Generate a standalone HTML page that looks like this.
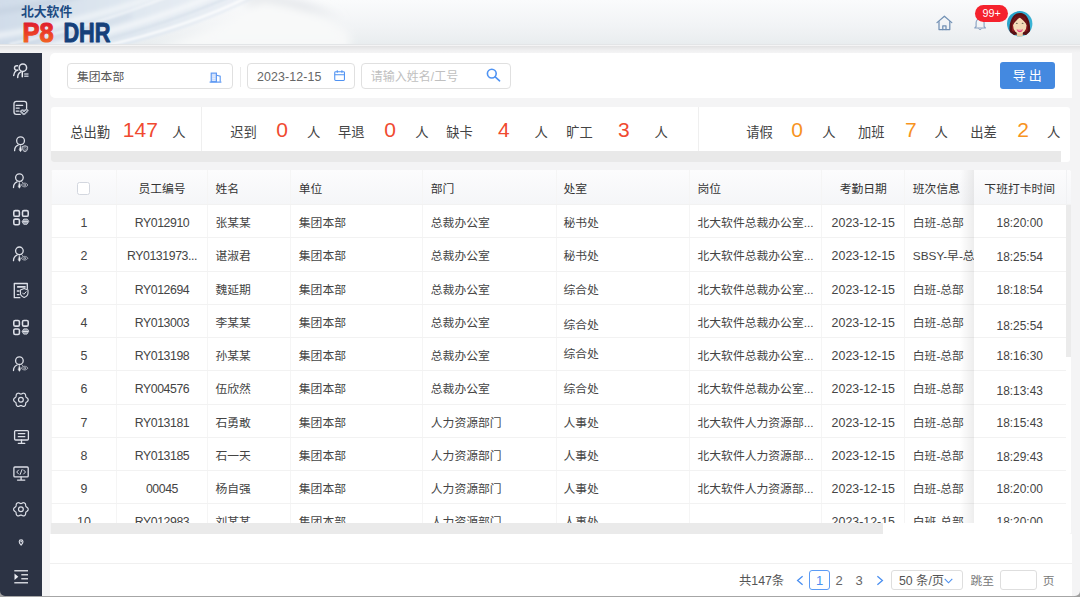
<!DOCTYPE html>
<html lang="zh-CN">
<head>
<meta charset="utf-8">
<title>P8 DHR</title>
<style>
*{box-sizing:border-box;margin:0;padding:0}
html,body{width:1080px;height:597px;overflow:hidden}
body{position:relative;background:#f4f4f5;font-family:"Liberation Sans","Noto Sans CJK SC",sans-serif;font-size:12px;color:#444;-webkit-font-smoothing:antialiased}
.abs{position:absolute}
/* header */
#hdr{position:absolute;left:0;top:0;width:1080px;height:45px;background:linear-gradient(180deg,#fafbfc 0%,#f2f4f6 55%,#e9edef 100%);border-bottom:1px solid #e3e5e7;overflow:hidden}
#hdr svg.bgsilk{position:absolute;left:0;top:0}
.logo-cn{position:absolute;left:21px;top:2.5px;font-size:12.8px;font-weight:700;color:#1d4b82;line-height:17px;white-space:nowrap}
/* sidebar */
#side{position:absolute;left:0;top:53px;width:42px;height:543px;background:#2c3344}
/* cards */
.card{position:absolute;background:#fff;border-radius:5px}
#c1{left:50px;top:53px;width:1021.5px;height:45px;border-radius:5px 0 0 5px}
#c2{left:50.6px;top:107.3px;width:1019.6px;height:55px;overflow:hidden;border-radius:3px}
#c3{left:51px;top:170px;width:1019.5px;height:363.8px;overflow:hidden;border-radius:3px 3px 3px 0}
#c4{left:50px;top:533.5px;width:1021.5px;height:62.5px;border-radius:0}
.inp{position:absolute;top:9.5px;height:26.5px;border:1px solid #e0e0e0;border-radius:4px;background:#fff;line-height:27px;font-size:11.8px;color:#555;white-space:nowrap}
.sl{position:absolute;top:16px;font-size:13.3px;line-height:20px;color:#444;white-space:nowrap}
.sn{position:absolute;top:9px;width:60px;text-align:center;font-size:21px;line-height:28px;white-space:nowrap}
.tr{position:absolute;left:0;width:1014.5px;border-bottom:1px solid #f2f2f2;color:#444;font-size:11.8px}
.th{background:linear-gradient(180deg,#fcfcfd,#f5f6f8);color:#333}
.td{position:absolute;top:0;height:100%;border-left:1px solid #f5f5f5;white-space:nowrap;overflow:hidden;padding:0 7.5px}
.td.c{text-align:center;padding:0}
.td.fx{background:#fff;border-left:none}
.th .td.fx{background:linear-gradient(180deg,#fcfcfd,#f5f6f8)}
.td.nm{font-size:12.4px}
.td.id{font-size:12.3px;letter-spacing:-.42px}
.td.tm{font-size:11.9px}
.cb{display:inline-block;width:13px;height:13px;border:1px solid #d3d7df;border-radius:2.5px;background:#fff;vertical-align:middle;position:relative;top:-1px;left:-1px}
.pg{position:absolute;top:37.6px;line-height:20px;font-size:12.3px;color:#555;white-space:nowrap}
.pn{width:20px;text-align:center;font-size:13px;color:#666}
</style>
</head>
<body>
<div id="hdr">
  <svg class="bgsilk" width="460" height="46" viewBox="0 0 460 46">
    <defs>
      <linearGradient id="lg1" x1="0" y1="0" x2="1" y2="0"><stop offset="0" stop-color="#d0dce9"/><stop offset=".5" stop-color="#dfe7f0"/><stop offset="1" stop-color="#edf1f6"/></linearGradient>
      <filter id="bl" x="-20%" y="-80%" width="140%" height="260%"><feGaussianBlur stdDeviation="2.5"/></filter>
      <filter id="bl2" x="-20%" y="-80%" width="140%" height="260%"><feGaussianBlur stdDeviation="1.1"/></filter>
      <filter id="bl3" x="-20%" y="-80%" width="140%" height="260%"><feGaussianBlur stdDeviation="5"/></filter>
    </defs>
    <g filter="url(#bl2)">
      <path d="M-5 -5H262C225 14 170 36 105 50H-5Z" fill="url(#lg1)"/>
    </g>
    <g filter="url(#bl3)">
      <path d="M262 -6C300 0 325 8 345 22C330 12 290 6 240 4Z" fill="#d9dde2" opacity=".9"/>
      <path d="M150 50C200 34 235 18 262 0C300 6 330 16 350 34L350 50Z" fill="#f8f9fa" opacity=".9"/>
    </g>
    <g filter="url(#bl)" fill="none" stroke-linecap="round">
      <path d="M-5 36C50 28 110 12 160 -5" stroke="#f4f7fa" stroke-width="5" opacity=".9"/>
      <path d="M40 48C100 36 165 16 215 -5" stroke="#fbfcfd" stroke-width="4" opacity=".95"/>
      <path d="M-5 12C25 8 55 2 80 -5" stroke="#c2cfde" stroke-width="5" opacity=".7"/>
      <path d="M-5 50C40 42 90 30 130 16" stroke="#cbd7e4" stroke-width="4" opacity=".6"/>
    </g>
    <g filter="url(#bl2)" fill="none" stroke-linecap="round">
      <path d="M95 48C160 34 215 14 250 -4" stroke="#ffffff" stroke-width="2.2" opacity=".95"/>
      <path d="M70 48C135 34 190 14 232 -4" stroke="#d3dde8" stroke-width="1.6" opacity=".8"/>
      <path d="M10 44C70 32 125 14 170 -4" stroke="#ffffff" stroke-width="1.3" opacity=".8"/>
    </g>
  </svg>
  <div class="logo-cn">北大软件</div>
  <svg class="abs" style="left:0;top:14px" width="130" height="34" viewBox="0 14 130 34" font-family="Liberation Sans, sans-serif" font-weight="700" font-size="28.5">
    <defs><linearGradient id="p8g" x1="0" y1="21" x2="0" y2="43" gradientUnits="userSpaceOnUse"><stop offset="0" stop-color="#dc1730"/><stop offset=".5" stop-color="#ea3a28"/><stop offset="1" stop-color="#f26424"/></linearGradient></defs>
    <text x="22.4" y="42" fill="url(#p8g)" stroke="url(#p8g)" stroke-width="1.1" stroke-linejoin="round" textLength="31.2" lengthAdjust="spacingAndGlyphs">P8</text>
    <text x="63.4" y="42" fill="#15407a" stroke="#15407a" stroke-width="1" stroke-linejoin="round" textLength="47" lengthAdjust="spacingAndGlyphs">DHR</text>
  </svg>
  <svg class="abs" style="left:936px;top:14.5px" width="17" height="16" viewBox="0 0 17 16" fill="none" stroke="#7190b4" stroke-width="1.25" stroke-linejoin="round" stroke-linecap="round"><path d="M1 7.6L8.4 1.2l7.400000000000001 6.4"/><path d="M3 6.6v8h10.8v-8"/><path d="M6.8 14.6v-3.8h3.2v3.8"/></svg>
  <svg class="abs" style="left:972.5px;top:16.5px" width="14" height="14" viewBox="972.5 16.5 14 14" fill="none" stroke="#8aa2c2" stroke-width="1.15" stroke-linejoin="round" stroke-linecap="round"><path d="M975.6 26V22.2c0-2.3 1.8-4.1 4-4.1s4 1.8 4 4.1V26l1.3 1.5h-10.6z"/><path d="M978.1 28.3c.3.5.8.8 1.5.8s1.2-.3 1.5-.8" stroke-width="1"/></svg>
  <div class="abs" style="left:975px;top:5px;width:33.2px;height:17px;border-radius:9px;background:#f5222d;color:#fff;font-size:10.8px;line-height:17px;text-align:center;letter-spacing:0">99+</div>
  <svg class="abs" style="left:1007px;top:10.5px" width="26" height="26" viewBox="0 0 26 26">
    <defs><clipPath id="avc"><circle cx="12.7" cy="12.8" r="12.7"/></clipPath><linearGradient id="avg" x1="0" y1="0" x2="1" y2="1"><stop offset="0" stop-color="#1f9cc6"/><stop offset="1" stop-color="#45bddb"/></linearGradient></defs>
    <circle cx="12.7" cy="12.8" r="12.7" fill="url(#avg)"/>
    <g clip-path="url(#avc)">
      <path d="M2.6 21.5C1.8 14 3.8 6.2 8.4 3.2C10.9 1.5 14.9 1.5 17.4 3.2C22 6.2 23.8 14 23 21.5C21.8 24.6 19 25.4 17.3 23.8L8.3 23.8C6.6 25.4 3.8 24.6 2.6 21.5Z" fill="#5a0f14"/>
      <path d="M5 20C4.600000000000001 14 5.8 8.5 8.8 5.5L10.4 7C8 10 7.2 15 7.4 21Z" fill="#8f1a1f"/>
      <path d="M20.6 20C21 14 19.8 8.5 16.8 5.5L15.2 7C17.6 10 18.4 15 18.2 21Z" fill="#8f1a1f"/>
      <rect x="9.8" y="20" width="6" height="7" fill="#ecc9a3"/>
      <ellipse cx="12.8" cy="14.6" rx="6.7" ry="8.1" fill="#f4dbb9"/>
      <path d="M12.8 4.2C8.8 4.8 6 8.2 5.7 14.2C7.4 11.4 10 8.6 12.8 6.6C15.6 8.6 18.2 11.4 19.9 14.2C19.6 8.2 16.8 4.8 12.8 4.2Z" fill="#6a1216"/>
      <ellipse cx="9.8" cy="12.3" rx="1" ry=".65" fill="#6e6a58"/><ellipse cx="15.6" cy="12.3" rx="1" ry=".65" fill="#6e6a58"/>
      <path d="M9.5 18.2C11.2 19 14.4 19 16.1 18.2C15.2 20.6 13.9 21.2 12.8 21.2C11.700000000000001 21.2 10.4 20.6 9.5 18.2Z" fill="#e8437c"/>
      <path d="M10.6 18.9C12 19.3 13.6 19.3 15 18.9C14.3 19.7 13.5 19.9 12.8 19.9C12.1 19.9 11.3 19.7 10.6 18.9Z" fill="#f7a3bf"/>
    </g>
  </svg>
</div>
<div class="abs" style="left:0;top:46px;width:1080px;height:7px;background:linear-gradient(180deg,rgba(0,0,0,.075),rgba(0,0,0,.02) 60%,rgba(0,0,0,0))"></div>
<div id="side"><svg class="abs" style="left:0;top:0" width="42" height="543" viewBox="0 53 42 543" fill="none" stroke="#dde0e8" stroke-width="1.3" stroke-linecap="round" stroke-linejoin="round">
<!-- 1 people list -->
<g stroke-width="1.5"><circle cx="22.9" cy="67.7" r="3.7"/><path d="M17.5 65.8a2.3 2.3 0 1 0 .4 4.2"/><path d="M13.700000000000001 75.5C13.8 73.3 14.600000000000001 71.7 16.1 70.8"/><path d="M17.700000000000003 77.5C17.700000000000003 75 18.900000000000002 72.9 20.900000000000002 71.9"/></g><path d="M22.3 72.4v4.4" stroke="#f0f2f6" stroke-width="1.5"/><path d="M24.2 73.9h4.3M24.2 76.3h4.3" stroke="#b9bec9" stroke-width="1.5" stroke-linecap="butt"/>
<!-- 2 doc check -->
<path d="M26.6 108.5v-4.900000000000002c0-1.3-1-2.3-2.3-2.3h-8c-1.3 0-2.3 1-2.3 2.3v8.4c0 1.3 1 2.3 2.3 2.3h4"/><path d="M16.2 105.3h6.5M16.2 108.1h3M16.2 111.1h2.4"/><path d="M20.2 111.2c1.2-1.6 2.6-1.9 3.9-.9c1.400000000000002-1.2 3-1.300000000000001 4.2-.2c-.7 2.2-2.5 3.9-4.4 4.6c-1.600000000000001-.5-3-1.7-3.7-3.5z" fill="#aeb4c0" stroke="#c4c9d3" stroke-width=".8"/><path d="M22.6 111.6l1.4 1.4 2.2-2.2" stroke="#2c3344" stroke-width="1"/>
<!-- 3 person shield -->
<circle cx="20.55" cy="140.8" r="3.9"/><path d="M14.6 150.7C14.6 148 16 146 18.1 145.2"/><path d="M20.5 145.8l1.1 4.3-1.1 1.6-1.1-1.6z" fill="#eef0f5" stroke="#eef0f5" stroke-width=".5"/><g opacity=".8"><path d="M22.4 146.6l2.6-.9 2.6.9v2.1c0 1.6-1.3 2.6-2.6 3.100000000000001-1.3-.5-2.6-1.5-2.6-3.1z" stroke-width="1" fill="#e4e7ee" fill-opacity=".45"/><path d="M23.9 148.5l.9.9 1.5-1.7" stroke="#2c3344" stroke-width=".8"/></g>
<!-- 4,6,9 person eye -->
<g transform="translate(0 0)"><circle cx="19.4" cy="177.6" r="3.8"/><path d="M13.5 187.5C13.5 184.8 14.9 182.8 17 181.9"/><path d="M19.4 182.4l1.05 4.3-1.05 1.6-1.05-1.6z" fill="#eef0f5" stroke="#eef0f5" stroke-width=".4"/><g opacity=".72"><path d="M21.3 185c1.6-2.5 5-2.5 6.6 0c-1.6 2.5-5 2.5-6.6 0z" stroke-width="1"/><circle cx="24.6" cy="185" r=".9" stroke-width=".9"/><path d="M21.6 181.3c.6.4 1 .9 1.300000000000001 1.6" stroke-width="1"/></g></g><g transform="translate(0 73.2)"><circle cx="19.4" cy="177.6" r="3.8"/><path d="M13.5 187.5C13.5 184.8 14.9 182.8 17 181.9"/><path d="M19.4 182.4l1.05 4.3-1.05 1.6-1.05-1.6z" fill="#eef0f5" stroke="#eef0f5" stroke-width=".4"/><g opacity=".72"><path d="M21.3 185c1.6-2.5 5-2.5 6.6 0c-1.6 2.5-5 2.5-6.6 0z" stroke-width="1"/><circle cx="24.6" cy="185" r=".9" stroke-width=".9"/><path d="M21.6 181.3c.6.4 1 .9 1.300000000000001 1.6" stroke-width="1"/></g></g><g transform="translate(0 183.1)"><circle cx="19.4" cy="177.6" r="3.8"/><path d="M13.5 187.5C13.5 184.8 14.9 182.8 17 181.9"/><path d="M19.4 182.4l1.05 4.3-1.05 1.6-1.05-1.6z" fill="#eef0f5" stroke="#eef0f5" stroke-width=".4"/><g opacity=".72"><path d="M21.3 185c1.6-2.5 5-2.5 6.6 0c-1.6 2.5-5 2.5-6.6 0z" stroke-width="1"/><circle cx="24.6" cy="185" r=".9" stroke-width=".9"/><path d="M21.6 181.3c.6.4 1 .9 1.300000000000001 1.6" stroke-width="1"/></g></g>
<!-- 5,8 grid -->
<g transform="translate(0 0)" stroke-width="1.55"><rect x="13.8" y="210.6" width="5.6" height="5.7" rx="1.4"/><rect x="22.5" y="210.6" width="5.7" height="5.7" rx="1.4"/><rect x="13.8" y="219.1" width="5.6" height="5.6" rx="1.4"/><path d="M28.55 221.70 L26.95 224.30 L23.75 224.30 L22.15 221.70 L23.75 219.10 L26.95 219.10Z" stroke-width="1" stroke="#c9cdd6" fill="#9097a5"/><path d="M22.9 221.7h4.9" stroke-width=".9" stroke="#eceef3"/></g><g transform="translate(0 109.8)" stroke-width="1.55"><rect x="13.8" y="210.6" width="5.6" height="5.7" rx="1.4"/><rect x="22.5" y="210.6" width="5.7" height="5.7" rx="1.4"/><rect x="13.8" y="219.1" width="5.6" height="5.6" rx="1.4"/><path d="M28.55 221.70 L26.95 224.30 L23.75 224.30 L22.15 221.70 L23.75 219.10 L26.95 219.10Z" stroke-width="1" stroke="#c9cdd6" fill="#9097a5"/><path d="M22.9 221.7h4.9" stroke-width=".9" stroke="#eceef3"/></g>
<!-- 7 doc shield -->
<path d="M27.3 288.5v-5h-13v14.2h5.5"/><path d="M17.7 286.9h7.3" stroke-width="1.6"/><path d="M17.3 291h1.8M17.3 294.6h1.8"/><path d="M20.4 290l3.8-1.4 3.8 1.4v3c0 2.2-2 3.7-3.8 4.4-1.8-.7-3.8-2.2-3.8-4.4z" stroke-width="1.1"/><path d="M22.6 293l1.3 1.3 2.2-2.5" stroke-width="1"/>
<!-- 10,13 gear -->
<g stroke-width="1.2"><path d="M28.15 399.80 L28.08 400.43 L27.80 401.02 L27.31 401.52 L26.74 401.93 L26.23 402.28 L25.88 402.68 L25.72 403.17 L25.66 403.80 L25.60 404.50 L25.40 405.16 L25.03 405.70 L24.52 406.08 L23.95 406.33 L23.30 406.38 L22.62 406.21 L21.98 405.92 L21.41 405.66 L20.90 405.55 L20.39 405.66 L19.82 405.92 L19.18 406.21 L18.50 406.38 L17.85 406.33 L17.27 406.08 L16.77 405.70 L16.40 405.16 L16.20 404.50 L16.14 403.80 L16.08 403.17 L15.92 402.68 L15.57 402.28 L15.06 401.93 L14.49 401.52 L14.00 401.02 L13.72 400.43 L13.65 399.80 L13.72 399.17 L14.00 398.58 L14.49 398.08 L15.06 397.67 L15.57 397.32 L15.92 396.93 L16.08 396.43 L16.14 395.80 L16.20 395.10 L16.40 394.44 L16.77 393.90 L17.27 393.52 L17.85 393.27 L18.50 393.22 L19.18 393.39 L19.82 393.68 L20.39 393.94 L20.90 394.05 L21.41 393.94 L21.98 393.68 L22.62 393.39 L23.30 393.22 L23.95 393.27 L24.52 393.52 L25.03 393.90 L25.40 394.44 L25.60 395.10 L25.66 395.80 L25.72 396.43 L25.88 396.93 L26.23 397.32 L26.74 397.67 L27.31 398.08 L27.80 398.58 L28.08 399.17Z"/><circle cx="20.9" cy="399.8" r="2.4"/></g><g stroke-width="1.2"><path d="M28.15 509.30 L28.08 509.93 L27.80 510.52 L27.31 511.02 L26.74 511.43 L26.23 511.78 L25.88 512.17 L25.72 512.67 L25.66 513.30 L25.60 514.00 L25.40 514.66 L25.03 515.20 L24.52 515.58 L23.95 515.83 L23.30 515.88 L22.62 515.71 L21.98 515.42 L21.41 515.16 L20.90 515.05 L20.39 515.16 L19.82 515.42 L19.18 515.71 L18.50 515.88 L17.85 515.83 L17.27 515.58 L16.77 515.20 L16.40 514.66 L16.20 514.00 L16.14 513.30 L16.08 512.67 L15.92 512.18 L15.57 511.78 L15.06 511.43 L14.49 511.02 L14.00 510.52 L13.72 509.93 L13.65 509.30 L13.72 508.67 L14.00 508.08 L14.49 507.58 L15.06 507.17 L15.57 506.82 L15.92 506.43 L16.08 505.93 L16.14 505.30 L16.20 504.60 L16.40 503.94 L16.77 503.40 L17.27 503.02 L17.85 502.77 L18.50 502.72 L19.18 502.89 L19.82 503.18 L20.39 503.44 L20.90 503.55 L21.41 503.44 L21.98 503.18 L22.62 502.89 L23.30 502.72 L23.95 502.77 L24.52 503.02 L25.03 503.40 L25.40 503.94 L25.60 504.60 L25.66 505.30 L25.72 505.93 L25.88 506.43 L26.23 506.82 L26.74 507.17 L27.31 507.58 L27.80 508.08 L28.08 508.67Z"/><circle cx="20.9" cy="509.3" r="2.4"/></g>
<!-- 11 monitor lines -->
<rect x="14.6" y="430.6" width="13.8" height="9.4" rx="1"/><path d="M18.3 433.6h6.5M18.3 436.7h6.5M21.5 440v3.2M18.3 443.3h6.5"/>
<!-- 12 monitor code -->
<rect x="13.9" y="467" width="14.3" height="9.9" rx="1"/><path d="M21.1 477v3M17.5 480.1h7.3"/><path d="M18.6 470l-1.9 2 1.9 2M23.6 470l1.9 2-1.9 2M22 469.6l-1.8 4.8" stroke-width="1"/>
<!-- 14 pin -->
<path d="M21.1 545.2c-1.2-1.4-1.9-2.4-1.9-3.4a1.9 1.9 0 0 1 3.8 0c0 1-.7 2-1.9 3.4z" stroke-width="1.1"/><circle cx="21.1" cy="541.7" r=".5" stroke-width=".7"/>
<!-- 15 indent -->
<g stroke="#cfd2d8" stroke-width="1.5" stroke-linecap="butt"><path d="M14.3 570.7h13.7M21.3 574.7h6.7M21.3 578.7h6.7M14.3 582.8h13.7"/></g><path d="M14.5 573.4l3.8 3.3-3.8 3.3z" fill="#eceef4" stroke="none"/>
</svg></div>
<div class="card" id="c1">
  <div class="inp" style="left:17px;width:165.5px;padding-left:9px">集团本部
    <svg class="abs" style="left:141px;top:8.5px" width="14" height="12" viewBox="209 72 14 12" fill="none" stroke="#5a96f2" stroke-width="1.1"><rect x="211.2" y="73.1" width="5.2" height="8.6" fill="#c6d9fb"/><path d="M212.3 75h3M212.3 76.8h3M212.3 78.6h3M212.3 80.3h3" stroke="#eef4fe" stroke-width=".8"/><path d="M216.6 75.2l3.6 1v5.5"/><path d="M209.6 82.1h11.8" stroke-width="1.2"/></svg>
  </div>
  <div class="abs" style="left:190px;top:14px;width:1px;height:20px;background:#ebebeb"></div>
  <div class="inp" style="left:197px;width:108px;padding-left:9px;color:#666;font-size:12.4px;letter-spacing:.1px">2023-12-15
    <svg class="abs" style="left:85.7px;top:6.3px" width="11.2" height="11.2" viewBox="0 0 12 12" fill="none" stroke="#4f92f2" stroke-width="1.15"><rect x=".8" y="1.8" width="10.4" height="9.4" rx="1"/><path d="M.8 5h10.4M3.5 .4v2.6M8.5 .4v2.6"/></svg>
  </div>
  <div class="inp" style="left:311.3px;width:149.7px;padding-left:8.5px;color:#c0c0c0;font-size:12px">请输入姓名/工号
    <svg class="abs" style="left:123.4px;top:4.4px" width="15" height="14" viewBox="0 0 15 14" fill="none" stroke="#4f93f3" stroke-width="1.6" stroke-linecap="round"><circle cx="5.8" cy="5.6" r="4.4"/><path d="M9.2 8.8l4.4 4"/></svg>
  </div>
  <div class="abs" style="left:950px;top:9px;width:54.5px;height:27px;border-radius:3px;background:#4489e0;color:#fff;font-size:13px;line-height:27px;text-align:center;letter-spacing:3px;padding-left:3px">导出</div>
</div>
<div class="card" id="c2">
  <span class="sl" style="left:19.7px">总出勤</span><span class="sn" style="left:59.8px;color:#f04a30">147</span><span class="sl" style="left:121.7px">人</span>
  <span class="sl" style="left:179.7px">迟到</span><span class="sn" style="left:201.5px;color:#f04a30">0</span><span class="sl" style="left:256.3px">人</span>
  <span class="sl" style="left:287.3px">早退</span><span class="sn" style="left:309.4px;color:#f04a30">0</span><span class="sl" style="left:364.7px">人</span>
  <span class="sl" style="left:395.7px">缺卡</span><span class="sn" style="left:423.2px;color:#f04a30">4</span><span class="sl" style="left:484.0px">人</span>
  <span class="sl" style="left:515.7px">旷工</span><span class="sn" style="left:543.2px;color:#f04a30">3</span><span class="sl" style="left:604.0px">人</span>
  <span class="sl" style="left:695.7px">请假</span><span class="sn" style="left:716.5px;color:#f7931e">0</span><span class="sl" style="left:771.7px">人</span>
  <span class="sl" style="left:807.3px">加班</span><span class="sn" style="left:830.2px;color:#f7931e">7</span><span class="sl" style="left:884.0px">人</span>
  <span class="sl" style="left:919.7px">出差</span><span class="sn" style="left:942.5px;color:#f7931e">2</span><span class="sl" style="left:996.3px">人</span>
  <div class="abs" style="left:150px;top:0;width:1px;height:43.5px;background:#efefef"></div>
  <div class="abs" style="left:647px;top:0;width:1px;height:43.5px;background:#efefef"></div>
  <div class="abs" style="left:0;top:43.5px;width:1010px;height:11.5px;background:#e9e9e9"></div>
</div>
<div class="card" id="c3">
<div class="tr th" style="top:0;height:35px;line-height:39px;width:1019.5px"><div class="td c" style="left:0.0px;width:65.0px"><span class="cb"></span></div><div class="td c" style="left:65.0px;width:91.0px">员工编号</div><div class="td l" style="left:156.0px;width:83.3px">姓名</div><div class="td l" style="left:239.3px;width:132.0px">单位</div><div class="td l" style="left:371.3px;width:133.7px">部门</div><div class="td l" style="left:505.0px;width:133.0px;padding-left:6.5px">处室</div><div class="td l" style="left:638.0px;width:132.3px">岗位</div><div class="td c" style="left:770.3px;width:83.0px">考勤日期</div><div class="td l" style="left:853.3px;width:69.7px">班次信息</div><div class="td c fx" style="left:923.0px;width:91.5px">下班打卡时间</div></div>
<div class="tr" style="top:35.00px;height:33.25px;line-height:36.25px"><div class="td c nm" style="left:0.0px;width:65.0px">1</div><div class="td c id" style="left:65.0px;width:91.0px">RY012910</div><div class="td l" style="left:156.0px;width:83.3px">张某某</div><div class="td l" style="left:239.3px;width:132.0px">集团本部</div><div class="td l" style="left:371.3px;width:133.7px">总裁办公室</div><div class="td l" style="left:505.0px;width:133.0px;padding-left:6.5px">秘书处</div><div class="td l" style="left:638.0px;width:132.3px">北大软件总裁办公室...</div><div class="td c nm" style="left:770.3px;width:83.0px">2023-12-15</div><div class="td l" style="left:853.3px;width:69.7px">白班-总部</div><div class="td c fx tm" style="left:923.0px;width:91.5px">18:20:00</div></div>
<div class="tr" style="top:68.25px;height:33.25px;line-height:36.25px"><div class="td c nm" style="left:0.0px;width:65.0px">2</div><div class="td c id" style="left:65.0px;width:91.0px">RY0131973...</div><div class="td l" style="left:156.0px;width:83.3px">谌淑君</div><div class="td l" style="left:239.3px;width:132.0px">集团本部</div><div class="td l" style="left:371.3px;width:133.7px">总裁办公室</div><div class="td l" style="left:505.0px;width:133.0px;padding-left:6.5px">秘书处</div><div class="td l" style="left:638.0px;width:132.3px">北大软件总裁办公室...</div><div class="td c nm" style="left:770.3px;width:83.0px">2023-12-15</div><div class="td l" style="left:853.3px;width:69.7px">SBSY-早-总</div><div class="td c fx tm" style="left:923.0px;width:91.5px;padding-top:0.5px">18:25:54</div></div>
<div class="tr" style="top:101.50px;height:33.25px;line-height:36.25px"><div class="td c nm" style="left:0.0px;width:65.0px">3</div><div class="td c id" style="left:65.0px;width:91.0px">RY012694</div><div class="td l" style="left:156.0px;width:83.3px">魏延期</div><div class="td l" style="left:239.3px;width:132.0px">集团本部</div><div class="td l" style="left:371.3px;width:133.7px">总裁办公室</div><div class="td l" style="left:505.0px;width:133.0px;padding-left:6.5px">综合处</div><div class="td l" style="left:638.0px;width:132.3px">北大软件总裁办公室...</div><div class="td c nm" style="left:770.3px;width:83.0px">2023-12-15</div><div class="td l" style="left:853.3px;width:69.7px">白班-总部</div><div class="td c fx tm" style="left:923.0px;width:91.5px;padding-top:0.5px">18:18:54</div></div>
<div class="tr" style="top:134.75px;height:33.25px;line-height:36.25px"><div class="td c nm" style="left:0.0px;width:65.0px">4</div><div class="td c id" style="left:65.0px;width:91.0px">RY013003</div><div class="td l" style="left:156.0px;width:83.3px">李某某</div><div class="td l" style="left:239.3px;width:132.0px">集团本部</div><div class="td l" style="left:371.3px;width:133.7px">总裁办公室</div><div class="td l" style="left:505.0px;width:133.0px;padding-left:6.5px"><span style="position:relative;top:1.8px">综合处</span></div><div class="td l" style="left:638.0px;width:132.3px">北大软件总裁办公室...</div><div class="td c nm" style="left:770.3px;width:83.0px">2023-12-15</div><div class="td l" style="left:853.3px;width:69.7px">白班-总部</div><div class="td c fx tm" style="left:923.0px;width:91.5px;padding-top:3px">18:25:54</div></div>
<div class="tr" style="top:168.00px;height:33.25px;line-height:36.25px"><div class="td c nm" style="left:0.0px;width:65.0px">5</div><div class="td c id" style="left:65.0px;width:91.0px">RY013198</div><div class="td l" style="left:156.0px;width:83.3px">孙某某</div><div class="td l" style="left:239.3px;width:132.0px">集团本部</div><div class="td l" style="left:371.3px;width:133.7px">总裁办公室</div><div class="td l" style="left:505.0px;width:133.0px;padding-left:6.5px"><span style="position:relative;top:-2.5px">综合处</span></div><div class="td l" style="left:638.0px;width:132.3px">北大软件总裁办公室...</div><div class="td c nm" style="left:770.3px;width:83.0px">2023-12-15</div><div class="td l" style="left:853.3px;width:69.7px">白班-总部</div><div class="td c fx tm" style="left:923.0px;width:91.5px">18:16:30</div></div>
<div class="tr" style="top:201.25px;height:33.25px;line-height:36.25px"><div class="td c nm" style="left:0.0px;width:65.0px">6</div><div class="td c id" style="left:65.0px;width:91.0px">RY004576</div><div class="td l" style="left:156.0px;width:83.3px">伍欣然</div><div class="td l" style="left:239.3px;width:132.0px">集团本部</div><div class="td l" style="left:371.3px;width:133.7px">总裁办公室</div><div class="td l" style="left:505.0px;width:133.0px;padding-left:6.5px">综合处</div><div class="td l" style="left:638.0px;width:132.3px">北大软件总裁办公室...</div><div class="td c nm" style="left:770.3px;width:83.0px">2023-12-15</div><div class="td l" style="left:853.3px;width:69.7px">白班-总部</div><div class="td c fx tm" style="left:923.0px;width:91.5px;padding-top:1.6px">18:13:43</div></div>
<div class="tr" style="top:234.50px;height:33.25px;line-height:36.25px"><div class="td c nm" style="left:0.0px;width:65.0px">7</div><div class="td c id" style="left:65.0px;width:91.0px">RY013181</div><div class="td l" style="left:156.0px;width:83.3px">石勇敢</div><div class="td l" style="left:239.3px;width:132.0px">集团本部</div><div class="td l" style="left:371.3px;width:133.7px">人力资源部门</div><div class="td l" style="left:505.0px;width:133.0px;padding-left:6.5px">人事处</div><div class="td l" style="left:638.0px;width:132.3px">北大软件人力资源部...</div><div class="td c nm" style="left:770.3px;width:83.0px">2023-12-15</div><div class="td l" style="left:853.3px;width:69.7px">白班-总部</div><div class="td c fx tm" style="left:923.0px;width:91.5px;padding-top:0.8px">18:15:43</div></div>
<div class="tr" style="top:267.75px;height:33.25px;line-height:36.25px"><div class="td c nm" style="left:0.0px;width:65.0px">8</div><div class="td c id" style="left:65.0px;width:91.0px">RY013185</div><div class="td l" style="left:156.0px;width:83.3px">石一天</div><div class="td l" style="left:239.3px;width:132.0px">集团本部</div><div class="td l" style="left:371.3px;width:133.7px">人力资源部门</div><div class="td l" style="left:505.0px;width:133.0px;padding-left:6.5px">人事处</div><div class="td l" style="left:638.0px;width:132.3px">北大软件人力资源部...</div><div class="td c nm" style="left:770.3px;width:83.0px">2023-12-15</div><div class="td l" style="left:853.3px;width:69.7px">白班-总部</div><div class="td c fx tm" style="left:923.0px;width:91.5px;padding-top:0.8px">18:29:43</div></div>
<div class="tr" style="top:301.00px;height:33.25px;line-height:36.25px"><div class="td c nm" style="left:0.0px;width:65.0px">9</div><div class="td c id" style="left:65.0px;width:91.0px">00045</div><div class="td l" style="left:156.0px;width:83.3px">杨自强</div><div class="td l" style="left:239.3px;width:132.0px">集团本部</div><div class="td l" style="left:371.3px;width:133.7px">人力资源部门</div><div class="td l" style="left:505.0px;width:133.0px;padding-left:6.5px">人事处</div><div class="td l" style="left:638.0px;width:132.3px">北大软件人力资源部...</div><div class="td c nm" style="left:770.3px;width:83.0px">2023-12-15</div><div class="td l" style="left:853.3px;width:69.7px">白班-总部</div><div class="td c fx tm" style="left:923.0px;width:91.5px;padding-top:0.4px">18:20:00</div></div>
<div class="tr" style="top:334.25px;height:33.25px;line-height:36.25px"><div class="td c nm" style="left:0.0px;width:65.0px">10</div><div class="td c id" style="left:65.0px;width:91.0px">RY012983</div><div class="td l" style="left:156.0px;width:83.3px">刘某某</div><div class="td l" style="left:239.3px;width:132.0px">集团本部</div><div class="td l" style="left:371.3px;width:133.7px">人力资源部门</div><div class="td l" style="left:505.0px;width:133.0px;padding-left:6.5px">人事处</div><div class="td l" style="left:638.0px;width:132.3px"></div><div class="td c nm" style="left:770.3px;width:83.0px">2023-12-15</div><div class="td l" style="left:853.3px;width:69.7px">白班-总部</div><div class="td c fx tm" style="left:923.0px;width:91.5px">18:20:00</div></div>
<div class="abs" style="left:909px;top:0;width:14px;height:352.7px;background:linear-gradient(90deg,rgba(0,0,0,0),rgba(0,0,0,.07))"></div>
<div class="abs" style="left:1014.5px;top:0;width:1px;height:35px;background:#f1f2f4"></div>
<div class="abs" style="left:1014.5px;top:35px;width:5px;height:317.7px;background:#fff"></div>
<div class="abs" style="left:1014.5px;top:35px;width:5px;height:152px;background:#ebebeb"></div>
<div class="abs" style="left:0;top:352.7px;width:1019.5px;height:11.1px;background:#fff"></div>
<div class="abs" style="left:0;top:352.7px;width:832px;height:11.1px;background:#eaeaea"></div>
</div>
<div class="card" id="c4">
  <div class="abs" style="left:0;top:29.5px;width:1022px;height:1px;background:#f0f0f0"></div>
  <div class="pg" style="left:689px">共147条</div>
  <svg class="abs" style="left:745.5px;top:41.5px" width="8" height="11" viewBox="0 0 8 11" fill="none" stroke="#4a8ff0" stroke-width="1.3"><path d="M6.6 1.2L1.6 5.5l5 4.3"/></svg>
  <div class="abs" style="left:759.2px;top:36.8px;width:20.5px;height:19.5px;border:1px solid #5b9bf5;border-radius:3px"></div>
  <div class="pg pn" style="left:759.5px;color:#4a8ff0">1</div>
  <div class="pg pn" style="left:779.2px">2</div>
  <div class="pg pn" style="left:799.2px">3</div>
  <svg class="abs" style="left:825.5px;top:41.5px" width="8" height="11" viewBox="0 0 8 11" fill="none" stroke="#4a8ff0" stroke-width="1.3"><path d="M1.4 1.2l5 4.3-5 4.3"/></svg>
  <div class="abs" style="left:841px;top:36.5px;width:72px;height:20px;border:1px solid #dedede;border-radius:3px"></div>
  <div class="pg" style="left:849px">50 条/页</div>
  <svg class="abs" style="left:893.5px;top:44px" width="9" height="6" viewBox="0 0 9 6" fill="none" stroke="#4a8ff0" stroke-width="1.1"><path d="M.7 .8l3.8 4 3.8-4"/></svg>
  <div class="pg" style="left:920.5px;color:#777;font-size:11.7px">跳至</div>
  <div class="abs" style="left:950px;top:36.5px;width:36.5px;height:20px;border:1px solid #dedede;border-radius:3px"></div>
  <div class="pg" style="left:992.7px;color:#777;font-size:11.7px">页</div>
</div>
<div class="abs" style="left:0;top:596px;width:1080px;height:1px;background:#a6a6a6"></div>
<svg class="abs" style="left:1074px;top:590px" width="6" height="7" viewBox="0 0 6 7"><path d="M6 0v7H0V6h1a5 5 0 0 0 5-5z" fill="#a0a0a0"/></svg>
<svg class="abs" style="left:0;top:590px" width="6" height="7" viewBox="0 0 6 7"><path d="M0 0v7h6V6H5a5 5 0 0 1-5-5z" fill="#a0a0a0"/></svg>
</body>
</html>
